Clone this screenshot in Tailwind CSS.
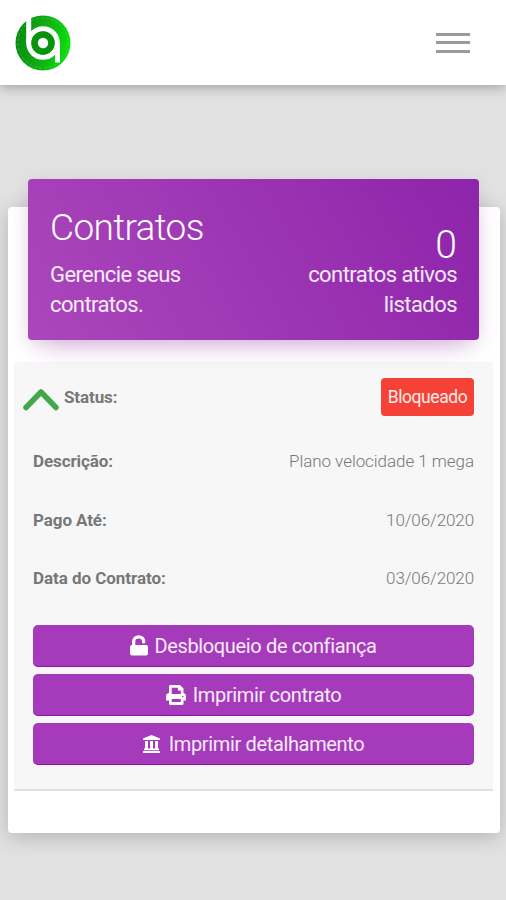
<!DOCTYPE html>
<html lang="pt-BR">
<head>
  <meta charset="UTF-8">
  <meta name="viewport" content="width=device-width, initial-scale=1.0">
  <title>Contratos</title>
  <script src="https://cdn.jsdelivr.net/npm/@tailwindcss/browser@4"></script>
</head>
<body class="bg-[#e1e1e1] font-[Roboto,sans-serif] font-light h-[900px] overflow-hidden">
  <!-- Navbar -->
  <header class="relative h-[85px] bg-white pl-[15px] pr-9 flex items-center justify-between shadow-[0_2px_12px_rgba(0,0,0,0.3)]">
    <svg class="w-14 h-14" viewBox="0 0 56 56" fill="none">
      <defs>
        <linearGradient id="logo" x1="0" y1="0.4" x2="1" y2="0.6">
          <stop offset="0" stop-color="#078a10"/>
          <stop offset="0.5" stop-color="#0fae14"/>
          <stop offset="1" stop-color="#0be30b"/>
        </linearGradient>
      </defs>
      <circle cx="28" cy="28" r="27.5" fill="url(#logo)"/>
      <circle cx="28" cy="28" r="25" stroke="#7ce07c" stroke-width="0.7" stroke-dasharray="3 2" opacity="0.5"/>
      <path d="M13.700 0V28M42.500 28V47.500" stroke="#fff" stroke-width="5"/>
      <circle cx="28" cy="28" r="14.300" stroke="#fff" stroke-width="5"/>
      <circle cx="28" cy="28" r="11.500" fill="#07940c"/>
      <circle cx="28" cy="28" r="5.200" fill="#fff"/>
    </svg>
    <button class="w-[34px] flex flex-col gap-[5.5px]">
      <span class="h-[3px] w-full bg-[#9b9b9b]"></span>
      <span class="h-[3px] w-full bg-[#9b9b9b]"></span>
      <span class="h-[3px] w-full bg-[#9b9b9b]"></span>
    </button>
  </header>

  <main class="pt-[122px] pl-2 pr-[6px]">
    <div class="h-[626px] bg-white rounded-[4px] shadow-[0_4px_20px_rgba(0,0,0,0.2)] pl-[6px] pr-[7px]">
      <!-- Cabeçalho do card -->
      <div class="relative -top-7 ml-[14px] mr-[14px] h-[161px] -mb-[6px] rounded-[4px] bg-linear-[60deg,#ab47bc,#8e24aa] text-white px-[22px] flex justify-between shadow-[0_14px_26px_-12px_rgba(156,39,176,0.4),0_4px_18px_rgba(0,0,0,0.08)]">
        <div class="pt-[27px] w-[160px]">
          <h1 class="text-[37px] leading-[44px] tracking-[-0.65px]">Contratos</h1>
          <p class="text-[22px] leading-[30px] pt-[10px] tracking-[-0.6px] font-normal text-white/90">Gerencie seus contratos.</p>
        </div>
        <div class="pt-[51px] w-[170px] text-right">
          <div class="text-[39px] leading-[30px]">0</div>
          <p class="text-[22px] leading-[30px] tracking-[-0.55px] font-normal text-white/90">contratos ativos listados</p>
        </div>
      </div>

      <!-- Contrato -->
      <div class="h-[429px] bg-[#f7f7f7] border-b-2 border-[#e1e1e1] px-[19px] text-[17px] leading-[24px] text-[#777]">
        <div class="h-[69px] flex items-center justify-between">
          <div class="flex items-center -ml-[10px] font-bold">
            <svg class="w-9 h-6 mr-[5px] mt-1" viewBox="0 0 36 24" fill="none" stroke="#43a84a" stroke-width="5.500" stroke-linecap="round" stroke-linejoin="round">
              <path d="M3 20.500L18 5L33 20.500"/>
            </svg>
            <span class="tracking-[-0.1px]">Status:</span>
          </div>
          <span class="h-[38px] w-[93px] mt-[1px] rounded-[4px] bg-[#f44336] text-white/90 text-[17.5px] tracking-[-0.45px] font-normal flex items-center justify-center">Bloqueado</span>
        </div>
        <div class="h-[59px] flex items-center justify-between">
          <span class="font-bold tracking-[-0.1px]">Descrição:</span><span class="tracking-[-0.05px]">Plano velocidade 1 mega</span>
        </div>
        <div class="h-[59px] flex items-center justify-between">
          <span class="font-bold tracking-[-0.1px]">Pago Até:</span><span class="tracking-[-0.1px]">10/06/2020</span>
        </div>
        <div class="h-[57px] flex items-center justify-between">
          <span class="font-bold tracking-[-0.05px]">Data do Contrato:</span><span class="tracking-[-0.1px]">03/06/2020</span>
        </div>

        <div class="pt-[19px] flex flex-col gap-[7px] text-[20px] tracking-[-0.35px] font-normal text-white">
          <button class="h-[42px] rounded-[5px] bg-[#a53aba] border-b border-[#960fa8] flex items-center justify-center gap-[6px]">
            <svg class="w-[18px] h-[21px]" viewBox="0 0 18 21" fill="none">
              <rect x="0" y="10" width="18" height="10.500" rx="2" fill="#fff"/>
              <path d="M3.700 11V6.500C3.700 0.300 13.700 0.300 13.700 6.500V7" stroke="#fff" stroke-width="3.200" stroke-linecap="round"/>
            </svg>
            <span class="text-white/90">Desbloqueio de confiança</span>
          </button>
          <button class="h-[42px] rounded-[5px] bg-[#a53aba] border-b border-[#960fa8] flex items-center justify-center gap-[7px]">
            <svg class="w-5 h-5" viewBox="0 0 20 20">
              <path fill="#fff" fill-rule="evenodd" d="M4.500 0H14L17.500 3.500V8Q20 8.500 20 11V15.500H17.500V18.500Q17.500 20 16 20H4.500Q3 20 3 18.500V15.500H0V11Q0 8.500 3 8V1.500Q3 0 4.500 0ZM5.700 2.700V9H14.800V5.500H12V2.700ZM5.700 14V17H14.800V14Z"/>
              <circle cx="16.800" cy="11.500" r="0.800" fill="#a53aba"/>
            </svg>
            <span class="text-white/90">Imprimir contrato</span>
          </button>
          <button class="h-[42px] rounded-[5px] bg-[#a53aba] border-b border-[#960fa8] flex items-center justify-center gap-[9px]">
            <svg class="w-[17px] h-[18px]" viewBox="0 0 17 18" fill="#fff">
              <path d="M8.500 0L17 3.500V5H0V3.500ZM2 6H5V14H2ZM7 6H10V14H7ZM12 6H15V14H12ZM1 13.500H16V15.300H1ZM0 16H17V18H0Z"/>
            </svg>
            <span class="text-white/90">Imprimir detalhamento</span>
          </button>
        </div>
      </div>
    </div>
  </main>
</body>
</html>
